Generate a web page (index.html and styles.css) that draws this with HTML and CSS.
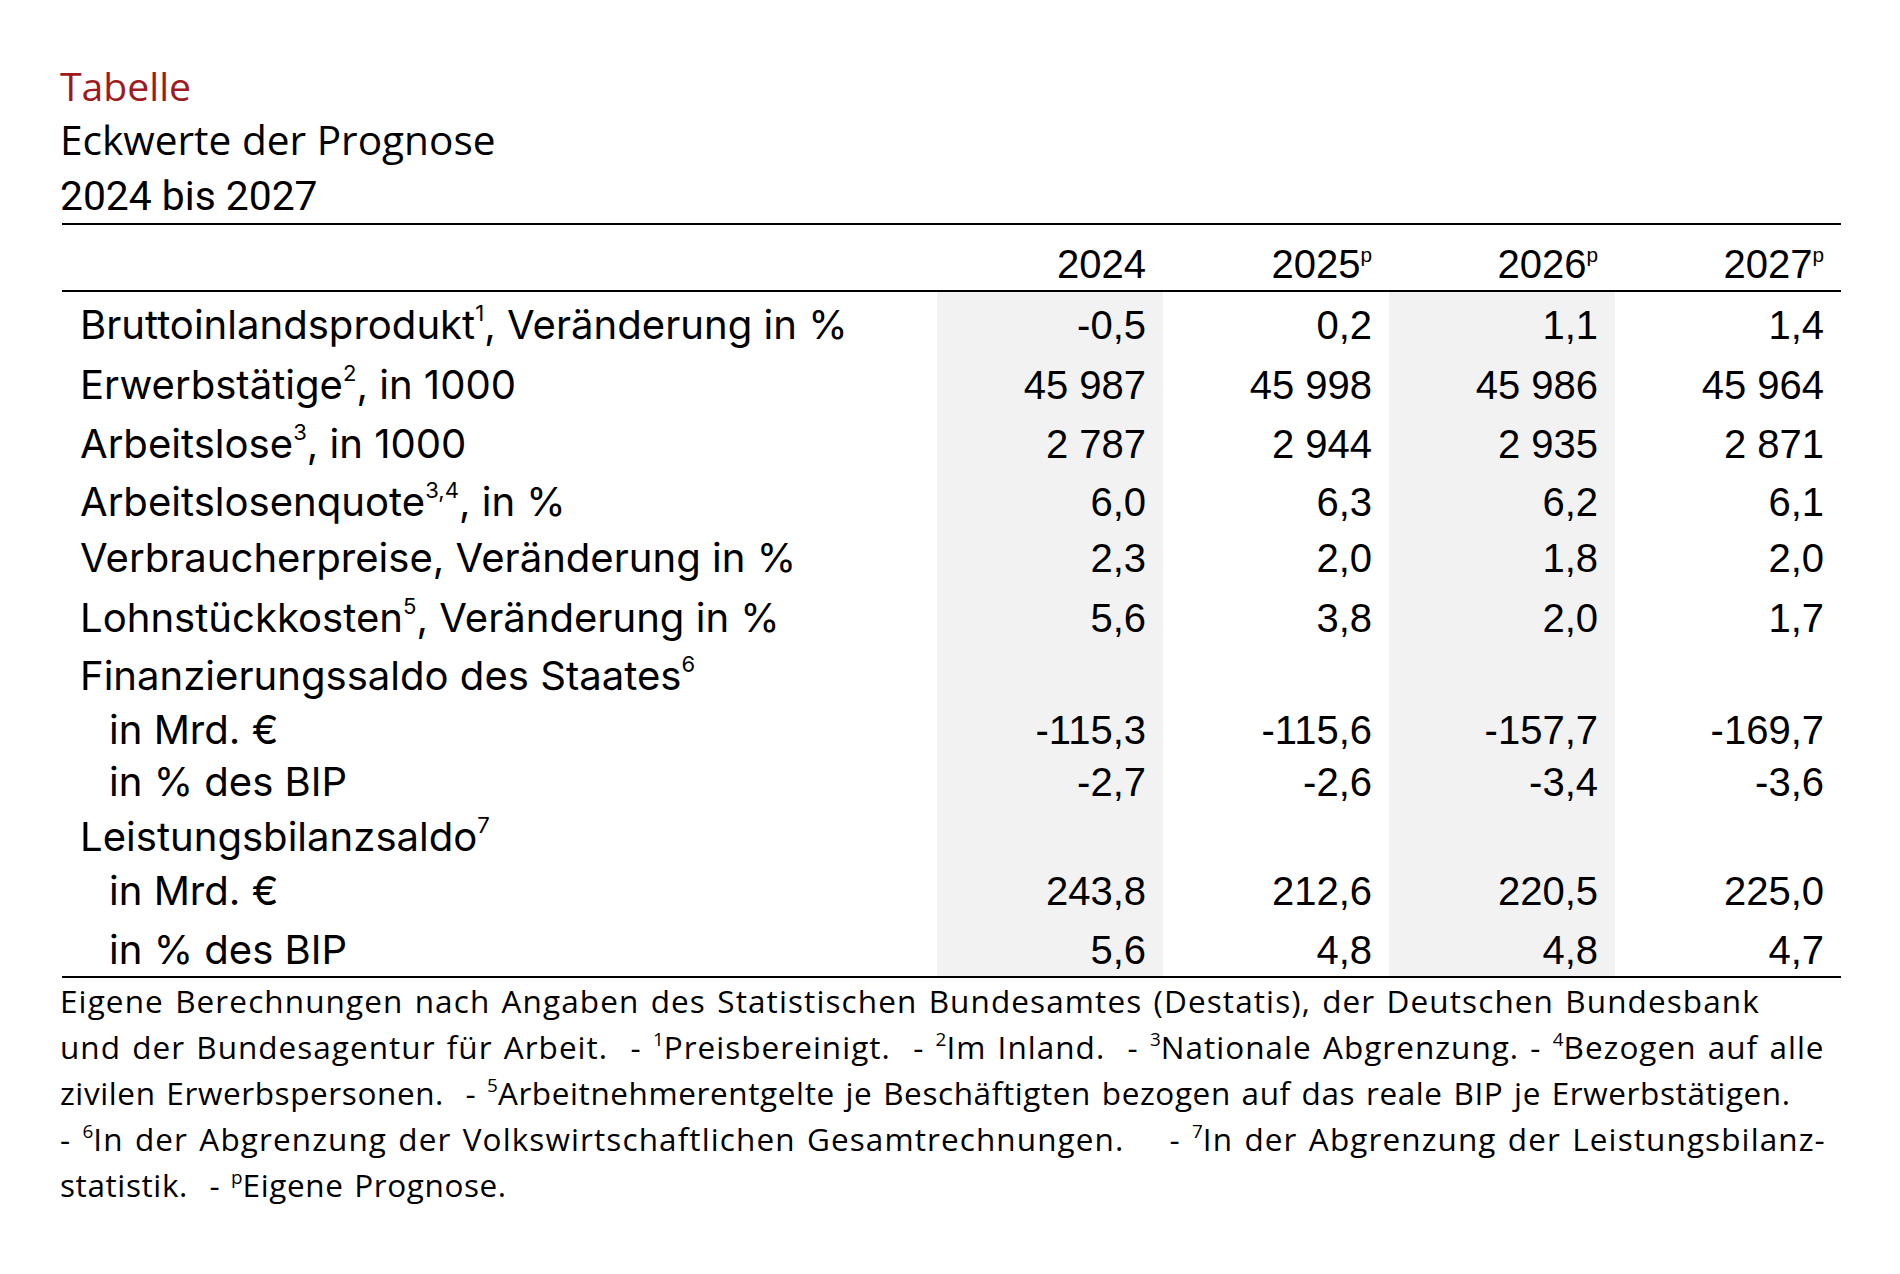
FILE: index.html
```html
<!DOCTYPE html>
<html lang="de">
<head>
<meta charset="utf-8">
<title>Eckwerte der Prognose</title>
<link rel="stylesheet" href="styles.css">
</head>
<body>
<div class="page">
  <div class="kicker">Tabelle</div>
  <h1 class="title">Eckwerte der Prognose</h1>
  <div class="subtitle">2024 bis 2027</div>
  <table class="data">
    <colgroup>
      <col class="c-label"><col class="c-num"><col class="c-num"><col class="c-num"><col class="c-num">
    </colgroup>
    <thead>
      <tr>
        <th class="label"></th>
        <th class="num">2024</th>
        <th class="num">2025<sup class="pre">p</sup></th>
        <th class="num">2026<sup class="pre">p</sup></th>
        <th class="num">2027<sup class="pre">p</sup></th>
      </tr>
    </thead>
    <tbody>
      <tr class="h59"><td class="label">Bruttoinlandsprodukt<sup class="fn">1</sup>, Veränderung in %</td><td class="num shade">-0,5</td><td class="num">0,2</td><td class="num shade">1,1</td><td class="num">1,4</td></tr>
      <tr class="h60"><td class="label">Erwerbstätige<sup class="fn">2</sup>, in 1000</td><td class="num shade">45 987</td><td class="num">45 998</td><td class="num shade">45 986</td><td class="num">45 964</td></tr>
      <tr class="h59"><td class="label">Arbeitslose<sup class="fn">3</sup>, in 1000</td><td class="num shade">2 787</td><td class="num">2 944</td><td class="num shade">2 935</td><td class="num">2 871</td></tr>
      <tr class="h58"><td class="label">Arbeitslosenquote<sup class="fn">3,4</sup>, in %</td><td class="num shade">6,0</td><td class="num">6,3</td><td class="num shade">6,2</td><td class="num">6,1</td></tr>
      <tr class="h56"><td class="label">Verbraucherpreise, Veränderung in %</td><td class="num shade">2,3</td><td class="num">2,0</td><td class="num shade">1,8</td><td class="num">2,0</td></tr>
      <tr class="h60"><td class="label">Lohnstückkosten<sup class="fn">5</sup>, Veränderung in %</td><td class="num shade">5,6</td><td class="num">3,8</td><td class="num shade">2,0</td><td class="num">1,7</td></tr>
      <tr class="h58"><td class="label">Finanzierungssaldo des Staates<sup class="fn">6</sup></td><td class="num shade"></td><td class="num"></td><td class="num shade"></td><td class="num"></td></tr>
      <tr class="h54"><td class="label sub">in Mrd. €</td><td class="num shade">-115,3</td><td class="num">-115,6</td><td class="num shade">-157,7</td><td class="num">-169,7</td></tr>
      <tr class="h52"><td class="label sub">in % des BIP</td><td class="num shade">-2,7</td><td class="num">-2,6</td><td class="num shade">-3,4</td><td class="num">-3,6</td></tr>
      <tr class="h55"><td class="label">Leistungsbilanzsaldo<sup class="fn">7</sup></td><td class="num shade"></td><td class="num"></td><td class="num shade"></td><td class="num"></td></tr>
      <tr class="h54"><td class="label sub">in Mrd. €</td><td class="num shade">243,8</td><td class="num">212,6</td><td class="num shade">220,5</td><td class="num">225,0</td></tr>
      <tr class="h59"><td class="label sub">in % des BIP</td><td class="num shade">5,6</td><td class="num">4,8</td><td class="num shade">4,8</td><td class="num">4,7</td></tr>
    </tbody>
  </table>
  <div class="notes">
    <div class="line">Eigene Berechnungen nach Angaben des Statistischen Bundesamtes (Destatis), der Deutschen Bundesbank</div>
    <div class="line mid">und der Bundesagentur für Arbeit.&nbsp; - <sup class="nfn">1</sup>Preisbereinigt.&nbsp; - <sup class="nfn">2</sup>Im Inland.&nbsp; - <sup class="nfn">3</sup>Nationale Abgrenzung. - <sup class="nfn">4</sup>Bezogen auf alle</div>
    <div class="line tight">zivilen Erwerbspersonen.&nbsp; - <sup class="nfn">5</sup>Arbeitnehmerentgelte je Beschäftigten bezogen auf das reale BIP je Erwerbstätigen.</div>
    <div class="line">- <sup class="nfn">6</sup>In der Abgrenzung der Volkswirtschaftlichen Gesamtrechnungen.&nbsp;&nbsp;&nbsp; - <sup class="nfn">7</sup>In der Abgrenzung der Leistungsbilanz-</div>
    <div class="line tight">statistik.&nbsp; - <sup class="nfn">p</sup>Eigene Prognose.</div>
  </div>
</div>
</body>
</html>
```

FILE: styles.css
```css
html, body {
  margin: 0;
  padding: 0;
  background: #ffffff;
  color: #000000;
}

.page {
  padding: 59px 0 0 60px;
  width: 1781px;
}

.kicker {
  font-family: "Open Sans", "Noto Sans", sans-serif;
  font-size: 39.2px;
  line-height: 54px;
  color: #9f1a1d;
}

.title {
  margin: 0;
  font-family: "Open Sans", "Noto Sans", sans-serif;
  font-weight: 400;
  font-size: 40.6px;
  line-height: 54px;
}

.subtitle {
  margin-top: 2px;
  font-family: Roboto, sans-serif;
  font-size: 40.8px;
  line-height: 54px;
}

.data {
  margin-left: 2px;
  width: 1779px;
  table-layout: fixed;
  border-collapse: separate;
  border-spacing: 0;
  border-top: 2px solid #000;
  border-bottom: 2px solid #000;
}

.c-label { width: 875px; }
.c-num { width: 226px; }

.data th,
.data td {
  padding: 0 0 2px 0;
  vertical-align: bottom;
  line-height: 48px;
  font-weight: 400;
  white-space: nowrap;
}

.data thead th {
  height: 63px;
  border-bottom: 2px solid #000;
}

.num {
  font-family: "Liberation Sans", Arial, sans-serif;
  font-size: 40px;
  text-align: right;
  padding-right: 17px !important;
}

.label {
  font-family: Inter, Roboto, sans-serif;
  font-size: 40.1px;
  text-align: left;
  padding-left: 18px !important;
}

.label.sub {
  padding-left: 47px !important;
}

.shade {
  background: #f2f2f2;
}

.pre {
  font-size: 0.52em;
  vertical-align: 0.75em;
  line-height: 0;
}

.fn {
  font-size: 0.55em;
  vertical-align: 0.8em;
  line-height: 0;
}

.h52 { height: 52px; }
.h54 { height: 54px; }
.h55 { height: 55px; }
.h56 { height: 56px; }
.h58 { height: 58px; }
.h59 { height: 59px; }
.h60 { height: 60px; }

.notes {
  margin: 0;
  font-family: "Open Sans", "Noto Sans", sans-serif;
  font-size: 31.5px;
  line-height: 46px;
}

.notes .line {
  white-space: nowrap;
  letter-spacing: 1.1px;
  word-spacing: 2px;
}

.notes .line.mid {
  letter-spacing: 1.02px;
}

.notes .line.tight {
  letter-spacing: 0.6px;
}

.nfn {
  font-size: 0.6em;
  vertical-align: 0.7em;
  line-height: 0;
  letter-spacing: 0;
}
```
